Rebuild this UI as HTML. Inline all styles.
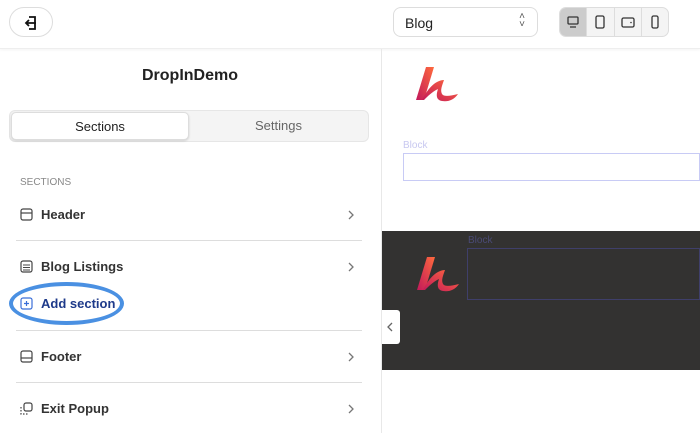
<!DOCTYPE html>
<html><head><style>
*{box-sizing:border-box;margin:0;padding:0}
body{width:700px;height:433px;overflow:hidden;background:#fff;font-family:"Liberation Sans",sans-serif;position:relative;color:#222}
.abs{position:absolute}
.top{left:0;top:0;width:700px;height:49px;background:#fff;border-bottom:1px solid #eee;box-shadow:0 1px 3px rgba(0,0,0,.05)}
.btn{left:9px;top:7px;width:44px;height:30px;border:1px solid #ddd;border-radius:16px;background:#fff}
.sel{left:393px;top:7px;width:145px;height:30px;border:1px solid #ddd;border-radius:8px;font-size:14px;padding:7px 11px}
.dev{left:559px;top:7px;width:110px;height:30px;border:1px solid #ddd;border-radius:7px;background:#f4f4f4;display:flex;overflow:hidden}
.dev div{flex:1;border-left:1px solid #ddd;display:flex;align-items:center;justify-content:center}
.dev div:first-child{border-left:none;background:#ccc}
.left{left:0;top:49px;width:382px;height:384px;border-right:1px solid #e8e8e8}
h1{position:absolute;left:0;width:380px;top:67px;text-align:center;font-size:16px;font-weight:bold}
.tabs{left:9px;top:110px;width:360px;height:32px;background:#f4f4f4;border:1px solid #e6e6e6;border-radius:6px}
.tab1{left:11px;top:112px;width:178px;height:28px;background:#fff;border:1px solid #ddd;border-radius:5px;box-shadow:0 1px 2px rgba(0,0,0,.15);font-size:13px;text-align:center;line-height:27px}
.tab2{left:190px;top:112px;width:177px;height:28px;font-size:13px;text-align:center;line-height:27px;color:#666}
.lbl{left:20px;top:177px;font-size:10px;color:#888}
.row{left:20px;font-size:13px;font-weight:bold;color:#333;display:flex;align-items:center;gap:8px}
.chev{left:346px}
.hr{left:16px;width:346px;height:1px;background:#ddd}
</style></head><body>
<div class="abs top"></div>
<div class="abs btn"><svg width="44" height="30" viewBox="0 0 44 30"><path d="M19 9h6v12h-6" fill="none" stroke="#111" stroke-width="1.8"/><path d="M26 15h-10M19 12l-3 3 3 3" fill="none" stroke="#111" stroke-width="1.8"/></svg></div>
<div class="abs sel">Blog<span style="position:absolute;right:12px;top:5px;font-size:10px;line-height:8px;color:#555">˄<br>˅</span></div>
<div class="abs dev">
<div><svg width="14" height="14"><rect x="2" y="2" width="10" height="7" rx="1" fill="none" stroke="#333" stroke-width="1.3"/><path d="M4 12h6" stroke="#333" stroke-width="1.3"/></svg></div>
<div><svg width="14" height="14"><rect x="3" y="1" width="8" height="12" rx="1.5" fill="none" stroke="#333" stroke-width="1.3"/></svg></div>
<div><svg width="14" height="14"><rect x="1" y="3" width="12" height="9" rx="1.5" fill="none" stroke="#333" stroke-width="1.3"/><circle cx="10" cy="7.5" r=".8" fill="#333"/></svg></div>
<div><svg width="14" height="14"><rect x="4" y="1" width="6" height="12" rx="1.5" fill="none" stroke="#333" stroke-width="1.3"/></svg></div>
</div>
<div class="abs left"></div>
<h1>DropInDemo</h1>
<div class="abs tabs"></div>
<div class="abs tab1">Sections</div>
<div class="abs tab2">Settings</div>
<div class="abs lbl">SECTIONS</div>
<div class="abs row" style="top:207px"><svg width="13" height="13"><rect x="1" y="1" width="11" height="11" rx="2" fill="none" stroke="#444" stroke-width="1.2"/><path d="M1 5h11" stroke="#444" stroke-width="1.2"/></svg>Header</div>
<svg class="abs chev" style="top:209px" width="10" height="12"><path d="M3 2l4 4-4 4" fill="none" stroke="#777" stroke-width="1.3"/></svg>
<div class="abs hr" style="top:240px"></div>
<div class="abs row" style="top:259px"><svg width="13" height="13"><rect x="1" y="1" width="11" height="11" rx="2" fill="none" stroke="#444" stroke-width="1.2"/><path d="M3 5h7M3 7.5h7M3 10h7" stroke="#444"/></svg>Blog Listings</div>
<svg class="abs chev" style="top:261px" width="10" height="12"><path d="M3 2l4 4-4 4" fill="none" stroke="#777" stroke-width="1.3"/></svg>
<div class="abs row" style="top:296px;color:#1e3a8a"><svg width="13" height="13"><rect x="1" y="1" width="11" height="11" rx="2" fill="none" stroke="#3b6fd8" stroke-width="1.2"/><path d="M6.5 4v5M4 6.5h5" stroke="#3b6fd8" stroke-width="1.2"/></svg>Add section</div>
<div class="abs" style="left:9px;top:282px;width:115px;height:43px;border:4px solid #4a90e2;border-radius:50%"></div>
<div class="abs hr" style="top:330px"></div>
<div class="abs row" style="top:349px"><svg width="13" height="13"><rect x="1" y="1" width="11" height="11" rx="2" fill="none" stroke="#444" stroke-width="1.2"/><path d="M1 8h11" stroke="#444" stroke-width="1.2"/></svg>Footer</div>
<svg class="abs chev" style="top:351px" width="10" height="12"><path d="M3 2l4 4-4 4" fill="none" stroke="#777" stroke-width="1.3"/></svg>
<div class="abs hr" style="top:382px"></div>
<div class="abs row" style="top:401px"><svg width="13" height="13"><rect x="4" y="1" width="8" height="8" rx="2" fill="none" stroke="#444" stroke-width="1.2"/><path d="M1 5v7h7" fill="none" stroke="#444" stroke-width="1.2" stroke-dasharray="1.5 1.5"/></svg>Exit Popup</div>
<svg class="abs chev" style="top:403px" width="10" height="12"><path d="M3 2l4 4-4 4" fill="none" stroke="#777" stroke-width="1.3"/></svg>

<svg class="abs" style="left:412px;top:64px" width="52" height="40" viewBox="0 0 52 40"><defs><linearGradient id="g" x1="0" y1="1" x2="1" y2="0"><stop offset="0" stop-color="#c2185b"/><stop offset="1" stop-color="#ff6a3d"/></linearGradient></defs><path d="M14 3h8L12 36H4z" fill="url(#g)"/><path d="M10 36c6-12 14-20 22-20-2 6-4 10-2 14 2 3 8 2 16 0-4 6-10 8-16 7-6-1-6-6-4-12-6 3-10 7-14 11z" fill="url(#g)"/></svg>
<div class="abs" style="left:403px;top:140px;font-size:10px;color:#c8c8f0">Block</div>
<div class="abs" style="left:403px;top:153px;width:297px;height:28px;border:1px solid #c8cbf5"></div>
<div class="abs" style="left:382px;top:231px;width:318px;height:139px;background:#333231"></div>
<svg class="abs" style="left:413px;top:254px" width="52" height="40" viewBox="0 0 52 40"><path d="M14 3h8L12 36H4z" fill="url(#g)"/><path d="M10 36c6-12 14-20 22-20-2 6-4 10-2 14 2 3 8 2 16 0-4 6-10 8-16 7-6-1-6-6-4-12-6 3-10 7-14 11z" fill="url(#g)"/></svg>
<div class="abs" style="left:468px;top:235px;font-size:10px;color:#4a4a75">Block</div>
<div class="abs" style="left:467px;top:248px;width:233px;height:52px;border:1px solid #3f3f6a"></div>
<div class="abs" style="left:382px;top:310px;width:18px;height:34px;background:#fff;border-radius:0 3px 3px 0"><svg width="18" height="34"><path d="M10 13l-4 4 4 4" fill="none" stroke="#666" stroke-width="1.3"/></svg></div>
</body></html>
